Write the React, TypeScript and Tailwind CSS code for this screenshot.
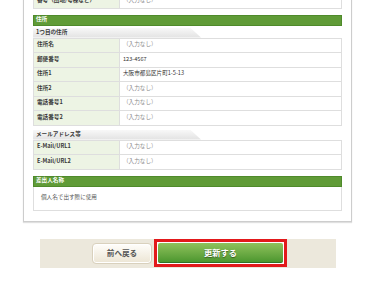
const font = { fontFamily: '"Noto Sans CJK JP", "Noto Sans", sans-serif' }

interface RowProps {
  label: string
  value?: string
}

function Row({ label, value }: RowProps) {
  return (
    <div className="flex h-[14.5px] border-b border-[#dedede]">
      <div className="w-[86px] shrink-0 flex items-center pl-[3px] bg-[#edf4e4] border-r border-[#dedede] font-bold text-[#3a3a3a]">
        {label}
      </div>
      <div className={`flex-1 flex items-center pl-[3px] ${value ? 'text-[#333]' : 'text-[#8a8a8a]'}`}>
        {value ?? '（入力なし）'}
      </div>
    </div>
  )
}

function GreenHeader({ title }: { title: string }) {
  return (
    <div className="h-[11px] flex items-center pl-[2px] bg-[#609b37] border border-[#4f8a2b] text-white font-bold">
      {title}
    </div>
  )
}

function SubHeader({ title }: { title: string }) {
  return (
    <div className="h-[10px] w-[168px] flex items-center pl-[3px] bg-gradient-to-b from-[#f8f8f8] to-[#e2e2e2] [clip-path:polygon(0_0,157px_0,100%_100%,0_100%)] font-bold text-[#3a3a3a]">
      {title}
    </div>
  )
}

export default function App() {
  return (
    <div className="w-[380px] h-[300px] overflow-hidden bg-white text-[5.6px] leading-none" style={font}>
      <div className="ml-[23px] w-[329px] -mt-[8px] border border-[#cdcdcd] shadow-[0_1px_1px_rgba(0,0,0,0.12)] bg-white px-[9px] pb-[10px]">
        <div className="border-x border-t border-[#dedede]">
          <Row label="番号（団地/号棟など）" />
        </div>

        <div className="mt-[6px]">
          <GreenHeader title="住所" />
        </div>
        <div className="mt-[2px]">
          <SubHeader title="1つ目の住所" />
        </div>
        <div className="border-x border-t border-[#dedede]">
          <Row label="住所名" />
          <Row label="郵便番号" value="123-4567" />
          <Row label="住所1" value="大阪市都島区片町1-5-13" />
          <Row label="住所2" />
          <Row label="電話番号1" />
          <Row label="電話番号2" />
        </div>
        <div className="mt-[4px]">
          <SubHeader title="メールアドレス等" />
        </div>
        <div className="border-x border-t border-[#dedede]">
          <Row label="E-Mail/URL1" />
          <Row label="E-Mail/URL2" />
        </div>

        <div className="mt-[6px]">
          <GreenHeader title="差出人名称" />
          <div className="h-[24px] flex items-center pl-[7px] border-x border-b border-[#dedede] text-[#555]">
            個人名で出す際に使用
          </div>
        </div>
      </div>

      <div className="ml-[40px] mt-[17px] w-[296px] h-[29px] bg-[#ece8dc] flex items-center pl-[52px] gap-[2px]">
        <button className="w-[60px] h-[21px] rounded-[4px] border border-[#d9d1bd] bg-gradient-to-b from-[#fffefb] to-[#ece5d4] shadow-[inset_0_0_0_1px_#fff] text-[7.6px] font-bold text-[#555]">
          前へ戻る
        </button>
        <div className="w-[133px] h-[28px] border-[3px] border-[#e2191b] bg-white p-[1px]">
          <button className="w-full h-full rounded-[2px] bg-gradient-to-b from-[#8fc25c] to-[#4c972f] border-b border-[#2e7226] text-[8.2px] font-bold text-white [text-shadow:0_1px_1px_rgba(0,0,0,0.45)]">
            更新する
          </button>
        </div>
      </div>
    </div>
  )
}
